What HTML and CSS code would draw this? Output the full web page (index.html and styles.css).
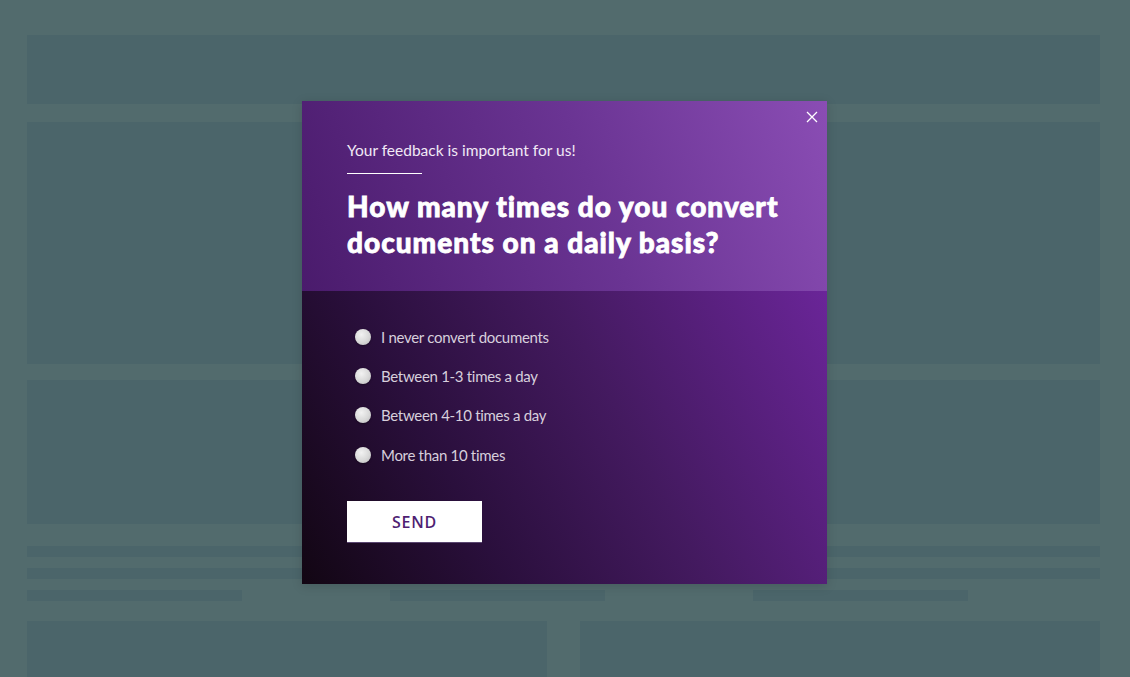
FILE: index.html
```html
<!DOCTYPE html>
<html>
<head>
    <title>Feedback survey</title>
    <link rel="stylesheet" href="styles.css">
</head>
<body>
    <div class="page">
        <div class="block block-top"></div>
        <div class="block block-hero"></div>
        <div class="block block-mid"></div>
        <div class="line"></div>
        <div class="line"></div>
        <div class="short-lines">
            <div class="short"></div>
            <div class="short"></div>
            <div class="short"></div>
        </div>
        <div class="cards">
            <div class="block card"></div>
            <div class="block card"></div>
        </div>
    </div>

    <div class="modal">
        <button class="close" aria-label="Close">
            <svg width="12" height="12" viewBox="0 0 12 12">
                <path d="M1 1 L11 11 M11 1 L1 11" stroke="#ffffff" stroke-width="1.3" fill="none"/>
            </svg>
        </button>
        <div class="modal-head">
            <p class="subtitle">Your feedback is important for us!</p>
            <div class="rule"></div>
            <h1>How many times do you convert documents on a daily basis?</h1>
        </div>
        <div class="modal-body">
            <ul class="options">
                <li><span class="radio"></span>I never convert documents</li>
                <li><span class="radio"></span>Between 1-3 times a day</li>
                <li><span class="radio"></span>Between 4-10 times a day</li>
                <li><span class="radio"></span>More than 10 times</li>
            </ul>
            <button class="send">SEND</button>
        </div>
    </div>
</body>
</html>
```

FILE: styles.css
```css
body {
    margin: 0;
    background: #526b6d;
    font-family: Lato, "Open Sans", sans-serif;
    overflow: hidden;
}
.page {
    padding: 35px 30px 0 27px;
    display: flex;
    flex-direction: column;
}
.block { background: #4b656a; }
.block-top { height: 69px; }
.block-hero { height: 242px; margin-top: 18px; }
.block-mid { height: 144px; margin-top: 16px; }
.line {
    height: 11px;
    background: #4b656a;
    margin-top: 11px;
}
.page .line:nth-of-type(4) { margin-top: 22px; }
.short-lines {
    display: flex;
    gap: 148px;
    margin-top: 11px;
}
.short {
    width: 215px;
    height: 11px;
    background: #4b656a;
}
.cards {
    display: flex;
    gap: 33px;
    margin-top: 20px;
}
.card { flex: 1; height: 56px; }

/* modal */
.modal {
    position: absolute;
    left: 302px;
    top: 101px;
    width: 525px;
    box-shadow: 0 2px 10px rgba(0,0,0,0.15);
}
.close {
    position: absolute;
    top: 9px;
    right: 8px;
    background: none;
    border: none;
    padding: 0;
    width: 14px;
    height: 14px;
    display: flex;
    align-items: center;
    justify-content: center;
    cursor: pointer;
}
.modal-head {
    height: 190px;
    box-sizing: border-box;
    padding: 40px 45px 0 45px;
    background: linear-gradient(70deg, #4a1b6c 0%, #6a3493 55%, #8a4db4 100%);
    color: #fff;
}
.subtitle {
    margin: 0;
    font-size: 15.5px;
    color: #f1e9f5;
    letter-spacing: 0;
}
.rule {
    width: 75px;
    height: 1px;
    background: #fff;
    margin-top: 14px;
}
h1 {
    margin: 14px 0 0;
    font-size: 28px;
    font-weight: 900;
    line-height: 36px;
    letter-spacing: 1px;
    -webkit-text-stroke: 0.8px #fff;
}
.modal-body {
    height: 293px;
    box-sizing: border-box;
    padding: 26px 45px 0 45px;
    background: linear-gradient(62deg, #120613 0%, #2a0f3c 30%, #441a60 60%, #6a2598 100%);
}
.options {
    list-style: none;
    margin: 0;
    padding: 0 0 0 8px;
}
.options li {
    display: flex;
    align-items: center;
    height: 39.3px;
    color: #d7cfdc;
    font-size: 15px;
    letter-spacing: -0.3px;
}
.radio {
    width: 16px;
    height: 16px;
    border-radius: 50%;
    background: radial-gradient(circle at 40% 35%, #f2f2f2 0%, #d8d8d8 55%, #b8b8b8 100%);
    box-shadow: 0 1px 2px rgba(0,0,0,0.35);
    margin-right: 10px;
    flex-shrink: 0;
}
.send {
    margin-top: 27px;
    width: 135px;
    height: 41px;
    background: #fff;
    border: none;
    box-shadow: 0 1px 0 #5a4670;
    color: #4f1f73;
    font-family: "Open Sans", sans-serif;
    font-weight: 600;
    font-size: 16px;
    letter-spacing: 0.8px;
    cursor: pointer;
}
```
